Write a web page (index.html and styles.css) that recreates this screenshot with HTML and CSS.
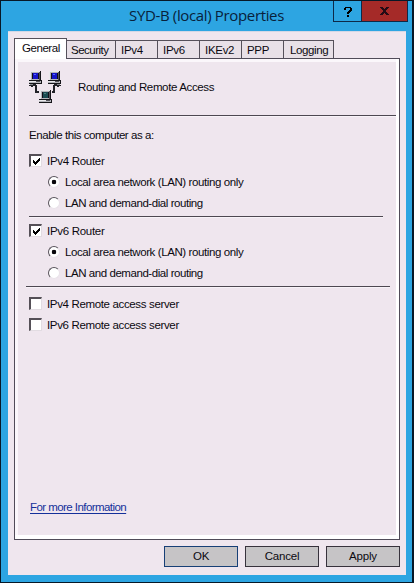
FILE: index.html
```html
<!DOCTYPE html>
<html lang="en">
<head>
<meta charset="utf-8">
<title>SYD-B (local) Properties</title>
<link rel="stylesheet" href="styles.css">
</head>
<body>
<div class="window">
  <header class="titlebar">
    <h1 class="title">SYD-B (local) Properties</h1>
    <div class="controls">
      <button class="help" aria-label="Help"><svg width="8" height="11" shape-rendering="crispEdges"><path d="M1 1h6v1h1v3H7v1H6v1H5v1H3V6h1V5h1V4h1V2H2v2H0V2h1zM3 9h2v2H3z"/></svg></button>
      <button class="close" aria-label="Close"><svg width="9" height="8" shape-rendering="crispEdges"><path d="M0 0h3l1.5 2L6 0h3L6 4l3 4H6L4.500 6 3 8H0l3-4z"/></svg></button>
    </div>
  </header>
  <main class="client">
    <nav class="tabs">
      <span class="tab active t-gen">General</span>
      <span class="tab t-sec">Security</span>
      <span class="tab t-v4">IPv4</span>
      <span class="tab t-v6">IPv6</span>
      <span class="tab t-ike">IKEv2</span>
      <span class="tab t-ppp">PPP</span>
      <span class="tab t-log">Logging</span>
    </nav>
    <section class="panel">
      <div class="heading">
        <svg class="network" width="32" height="32" viewBox="0 0 32 32" shape-rendering="crispEdges">
          <defs>
            <g id="pc">
              <path fill="#16161a" d="M1 0h11v9h1v4H0V9h1z"/>
              <path fill="#b4b4ba" d="M1 0h10v9H1zM0 10h12v2H0z"/>
              <path fill="#e9e9ec" d="M1 0h10v1H2v8H1zM0 10h7v1H0z"/>
              <path fill="#101018" d="M3 2h7v6H3z"/>
              <path fill="#55555a" d="M7 10h4v1H7zM10 1h1v8h-1z"/>
            </g>
          </defs>
          <path fill="#222228" d="M4 13h3v1H4zM0 14h6v1H0zM2 15h2v1H2zM6 14h2v6h2v2H6zM25 13h3v1h-3zM26 14h6v1h-6zM28 15h2v1h-2zM24 14h2v8h-3v-2h1z"/>
          <path fill="#8a8a90" d="M1 13h3v1H1zM28 13h3v1h-3z"/>
          <use href="#pc"/><path fill="#1515c8" d="M4 2h5v6H4z"/><path fill="#5266ff" d="M5 3h2v1H5z"/>
          <use href="#pc" x="19"/><path fill="#1515c8" d="M23 2h5v6h-5z"/><path fill="#5266ff" d="M24 3h2v1h-2z"/>
          <use href="#pc" x="10" y="19"/><path fill="#1a4d52" d="M14 21h5v6h-5z"/><path fill="#508080" d="M15 22h2v1h-2z"/>
        </svg>
        <span class="w-head">Routing and Remote Access</span>
      </div>
      <hr class="rule first">
      <p class="intro"><span class="w-intro">Enable this computer as a:</span></p>

      <div class="row"><i class="check"><svg width="7" height="7" shape-rendering="crispEdges"><path d="M0 2h1v1h1v1h1V3h1V2h1V1h1V0h1v3H6v1H5v1H4v1H3v1H2V6H1V5H0z"/></svg></i><span class="w-router">IPv4 Router</span></div>
      <div class="row sub"><i class="radio on"></i><span class="w-local">Local area network (LAN) routing only</span></div>
      <div class="row sub"><i class="radio"></i><span class="w-dial">LAN and demand-dial routing</span></div>
      <hr class="rule second">
      <div class="row"><i class="check"><svg width="7" height="7" shape-rendering="crispEdges"><path d="M0 2h1v1h1v1h1V3h1V2h1V1h1V0h1v3H6v1H5v1H4v1H3v1H2V6H1V5H0z"/></svg></i><span class="w-router">IPv6 Router</span></div>
      <div class="row sub"><i class="radio on"></i><span class="w-local">Local area network (LAN) routing only</span></div>
      <div class="row sub"><i class="radio"></i><span class="w-dial">LAN and demand-dial routing</span></div>
      <hr class="rule third">
      <div class="row"><i class="check"></i><span class="w-remote">IPv4 Remote access server</span></div>
      <div class="row"><i class="check"></i><span class="w-remote">IPv6 Remote access server</span></div>
      <a class="more">For more Information</a>
    </section>
    <footer class="buttons">
      <button class="btn default">OK</button>
      <button class="btn">Cancel</button>
      <button class="btn">Apply</button>
    </footer>
  </main>
</div>
</body>
</html>
```

FILE: styles.css
```css
* { box-sizing: border-box; }
body {
  margin: 0;
  font: 11.5px/21px "Liberation Sans", Arial, sans-serif;
  color: #0b0910;
}
button { font: inherit; color: inherit; padding: 0; }
.window {
  width: 414px;
  height: 583px;
  padding: 0 6px 7px 7px;
  border: 1px solid #071827;
  border-right-width: 2px;
  background: #2da5e2;
  display: flex;
  flex-direction: column;
}
.titlebar { height: 30px; display: flex; justify-content: flex-end; flex: none; }
.title {
  margin: 0;
  width: 204px;
  font: 15px/29px "Open Sans", sans-serif;
  letter-spacing: -0.35px;
  white-space: nowrap;
  color: #08213b;
}
.controls { display: flex; height: 21px; margin-right: -2px; }
.controls button {
  display: flex;
  align-items: center;
  justify-content: center;
  border: 1px solid #0d2948;
  border-top: 0;
  background: #2da5e2;
}
.help { width: 29px; }
.controls .close { width: 47px; margin-left: -1px; background: #a52a28; fill: #240b15; }
.client { flex: 1; background: #efe6ee; padding: 6px 6px 0; border-top: 1px solid #d3d8e6; }
.tabs { display: flex; align-items: flex-end; height: 20px; }
.tab {
  height: 18px;
  line-height: 19px;
  border: 1px solid #55505a;
  border-left-width: 0;
  border-bottom: 0;
  background: #e8e0e7;
  white-space: nowrap;
}
.tab.active {
  height: 21px;
  margin-bottom: -1px;
  position: relative;
  background: #fff;
  border-left-width: 1px;
  line-height: 19px;
}
.t-gen { width: 53px; padding-left: 7px; letter-spacing: -0.45px; }
.t-sec { width: 49px; padding-left: 4px; letter-spacing: -0.5px; }
.t-v4, .t-v6, .t-ike, .t-ppp { width: 42px; padding-left: 5px; letter-spacing: -0.3px; }
.t-log { width: 50px; padding-left: 6px; letter-spacing: -0.4px; }
.panel {
  width: 386px;
  height: 482px;
  border: 1px solid #504b58;
  box-shadow: inset -3px -4px #fff, inset 3px 3px #fbf7fb;
  padding: 0 3px 0 14px;
  display: flex;
  flex-direction: column;
  white-space: nowrap;
}
.heading { height: 56px; display: flex; align-items: center; gap: 17px; flex: none; }
.rule { flex: none; margin: 0; height: 2px; border: 0; border-top: 1px solid #4d4851; background: #f8f3f8; }
.first { width: 367px; }
.second { width: 354px; margin: 3px 0 2px; }
.third { width: 364px; margin: 3px 0 5px -3px; }
.intro { margin: 8px 0 4px; height: 21px; flex: none; }
.row { height: 21px; display: flex; align-items: center; flex: none; }
.row span { line-height: 21px; padding-top: 1px; }
.check {
  width: 13px;
  height: 13px;
  margin-right: 5px;
  display: flex;
  align-items: center;
  justify-content: center;
  flex: none;
  background: #fff;
  border: 2px solid #555057;
  border-right: 1px solid #e2dce2;
  border-bottom: 1px solid #e2dce2;
}
.sub { padding-left: 19px; }
.radio {
  width: 12px;
  height: 12px;
  flex: none;
  margin-right: 5px;
  border-radius: 50%;
  border: 1.5px solid #58535b;
  border-right-color: #e9e2e9;
  border-bottom-color: #e9e2e9;
  background: #fff;
}
.radio.on { background: radial-gradient(circle, #08060b 2px, #fff 2.6px); }
.w-head { letter-spacing: -0.36px; }
.w-intro { letter-spacing: -0.44px; }
.w-router { letter-spacing: -0.3px; }
.w-local { letter-spacing: -0.4px; }
.w-dial { letter-spacing: -0.44px; }
.w-remote { letter-spacing: -0.35px; }
.more {
  margin: 162px 0 0 1px;
  align-self: flex-start;
  color: #14309a;
  text-decoration: underline;
  text-underline-offset: 2px;
  letter-spacing: -0.56px;
}
.buttons { display: flex; justify-content: flex-end; gap: 7px; margin-top: 6px; }
.btn { width: 74px; height: 21px; border: 1px solid #37323c; background: #c6c4c6; line-height: 19px; letter-spacing: -0.2px; }
.btn.default { border-color: #173f76; }
```
